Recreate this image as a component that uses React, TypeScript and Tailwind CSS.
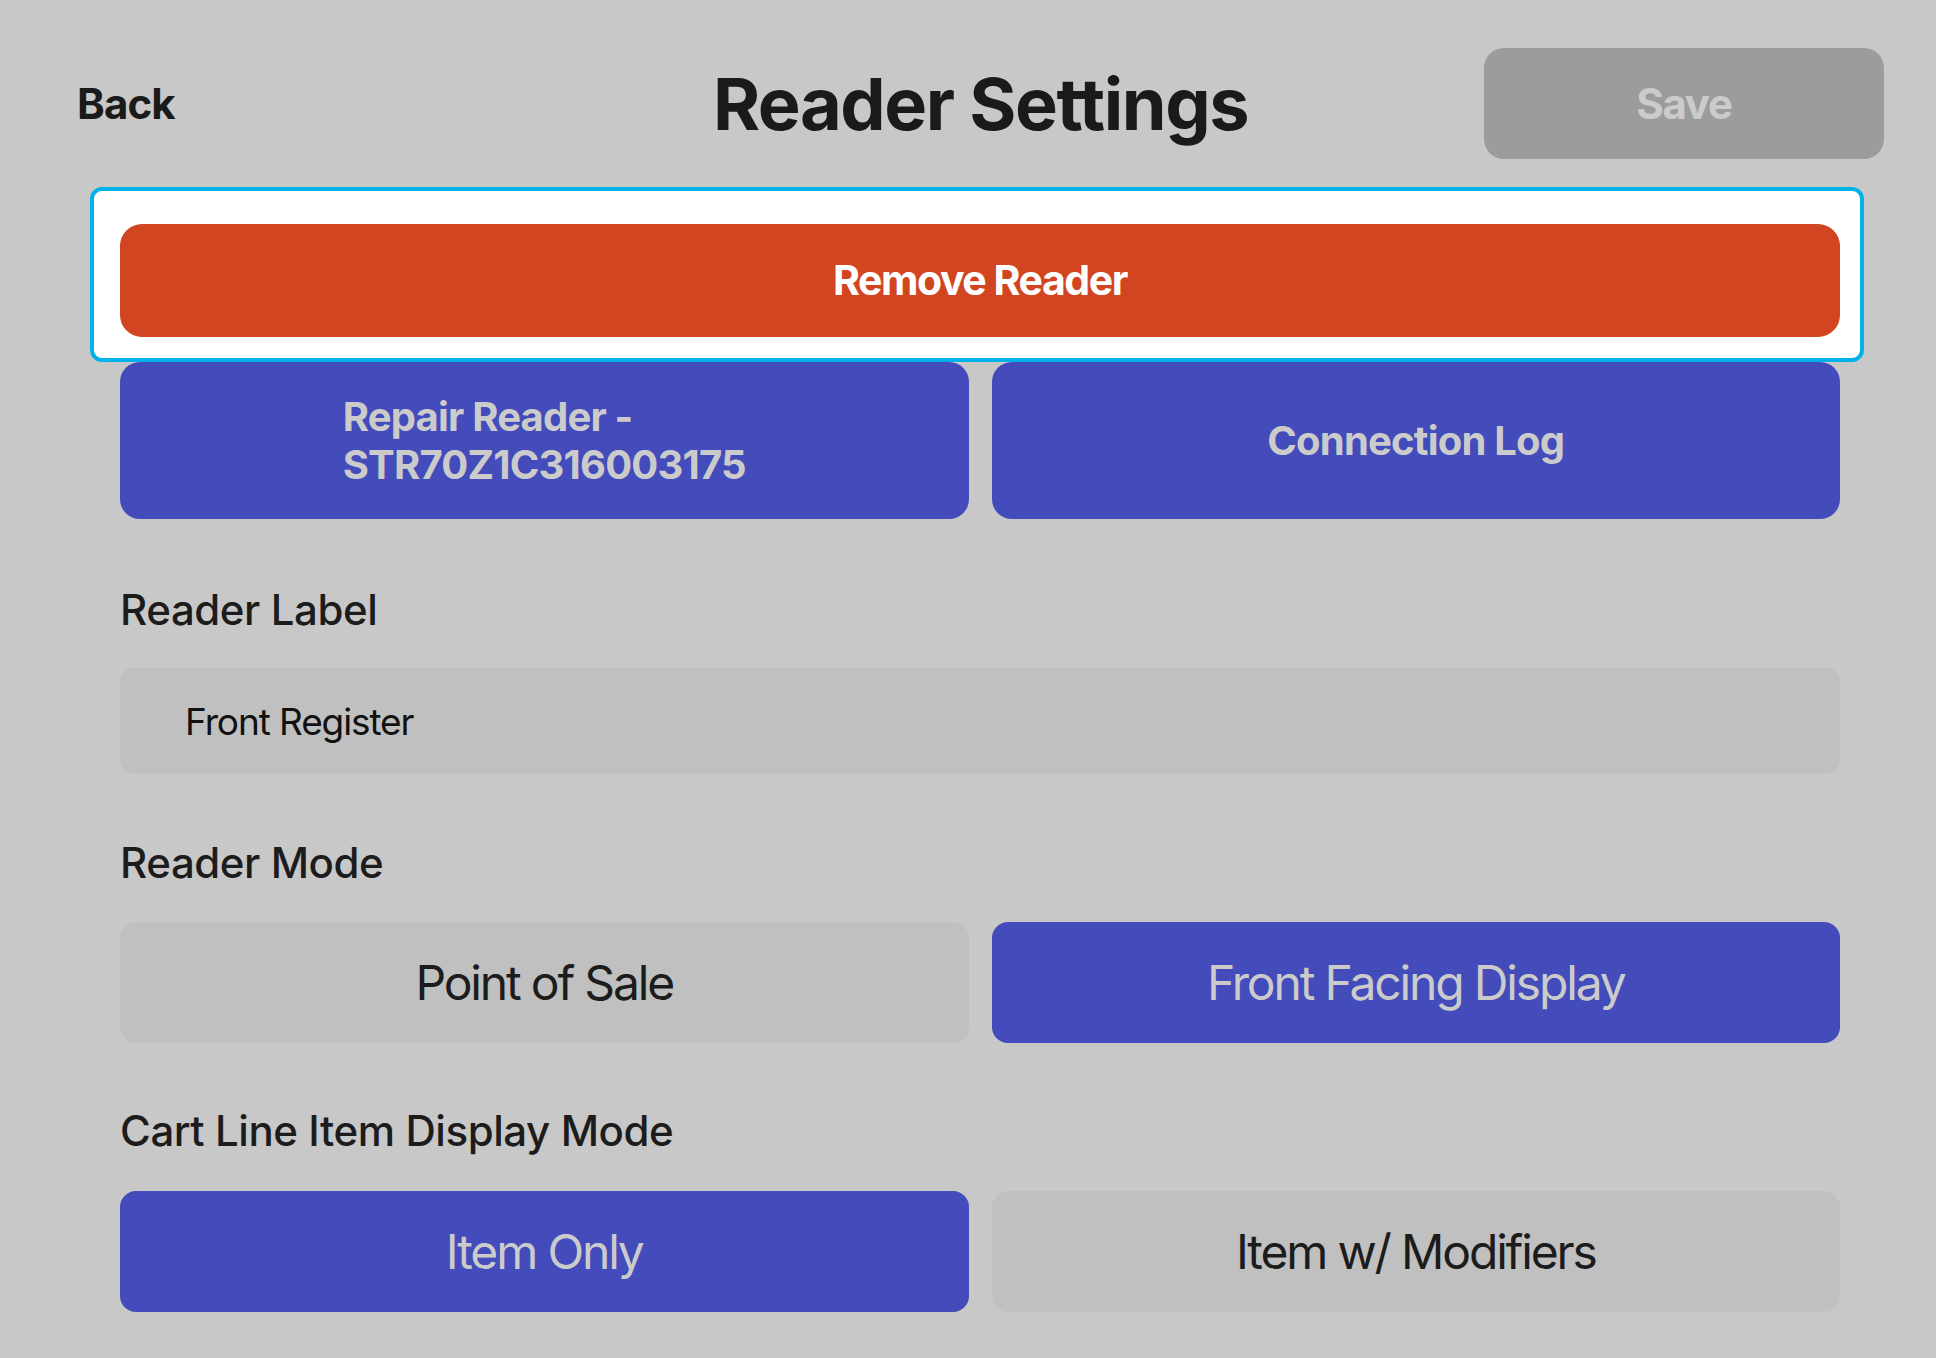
import { useState } from 'react'

const font = { fontFamily: 'Inter, "Noto Sans", sans-serif' }

function ChoiceButton({ label, active, onClick }: { label: string; active: boolean; onClick: () => void }) {
    return (
        <button
            type="button"
            onClick={onClick}
            className={`h-[121px] rounded-[16px] text-[48px] leading-[58px] tracking-[-0.045em] flex items-center justify-center ${
                active ? 'bg-[#434cba] text-[#cbcbcb]' : 'bg-[#c0c0c0] text-[#1c1c1c]'
            }`}
        >
            {label}
        </button>
    )
}

export default function App() {
    const [label, setLabel] = useState('Front Register')
    const [mode, setMode] = useState<'pos' | 'ffd'>('ffd')
    const [lineMode, setLineMode] = useState<'item' | 'modifiers'>('item')

    return (
        <div className="min-h-screen w-full bg-[#c8c8c8] pt-[48px]" style={font}>
            {/* header */}
            <div className="grid grid-cols-[1fr_auto_1fr] items-center pl-[77px] pr-[52px] h-[111px]">
                <button type="button" className="justify-self-start text-[42px] leading-[50px] font-bold tracking-[-0.02em] text-[#1a1a1a]">
                    Back
                </button>
                <h1 className="text-[72px] leading-[86px] font-bold tracking-[-0.02em] text-[#1a1a1a]">Reader Settings</h1>
                <button
                    type="button"
                    disabled
                    className="justify-self-end w-[400px] h-[111px] rounded-[20px] bg-[#9c9c9c] text-[#cbcbcb] text-[42px] font-bold tracking-[-0.03em]"
                >
                    Save
                </button>
            </div>

            {/* focused remove button */}
            <div className="mt-[28px] ml-[90px] w-[1774px] border-4 border-[#00b1eb] rounded-[12px] bg-white pt-[33px] pb-[21px] pl-[26px] pr-[20px]">
                <button
                    type="button"
                    className="w-full h-[113px] rounded-[22px] bg-[#d14521] text-white text-[41px] font-bold tracking-[-0.035em]"
                >
                    Remove Reader
                </button>
            </div>

            <div className="ml-[120px] w-[1720px]">
                <div className="grid grid-cols-2 gap-x-[23px]">
                    <button type="button" className="h-[157px] rounded-[20px] bg-[#434cba] text-[#cbcbcb] flex items-center justify-center">
                        <span className="text-left text-[40px] leading-[48px] font-bold tracking-[-0.02em]">
                            Repair Reader -<br />
                            STR70Z1C316003175
                        </span>
                    </button>
                    <button type="button" className="h-[157px] rounded-[20px] bg-[#434cba] text-[#cbcbcb] text-[40px] font-bold tracking-[-0.02em]">
                        Connection Log
                    </button>
                </div>

                <div className="mt-[66px] text-[42px] leading-[50px] font-medium tracking-[-0.01em] text-[#1c1c1c]">Reader Label</div>
                <input
                    value={label}
                    onChange={(e) => setLabel(e.target.value)}
                    className="mt-[33px] w-full h-[106px] rounded-[14px] bg-[#c0c0c0] pl-[65px] text-[37px] tracking-[-0.03em] text-[#111] outline-none"
                    style={font}
                />

                <div className="mt-[64px] text-[42px] leading-[50px] font-medium tracking-[-0.01em] text-[#1c1c1c]">Reader Mode</div>
                <div className="mt-[34px] grid grid-cols-2 gap-x-[23px]">
                    <ChoiceButton label="Point of Sale" active={mode === 'pos'} onClick={() => setMode('pos')} />
                    <ChoiceButton label="Front Facing Display" active={mode === 'ffd'} onClick={() => setMode('ffd')} />
                </div>

                <div className="mt-[63px] text-[42px] leading-[50px] font-medium tracking-[-0.01em] text-[#1c1c1c]">Cart Line Item Display Mode</div>
                <div className="mt-[35px] grid grid-cols-2 gap-x-[23px]">
                    <ChoiceButton label="Item Only" active={lineMode === 'item'} onClick={() => setLineMode('item')} />
                    <ChoiceButton label="Item w/ Modifiers" active={lineMode === 'modifiers'} onClick={() => setLineMode('modifiers')} />
                </div>
            </div>
        </div>
    )
}
